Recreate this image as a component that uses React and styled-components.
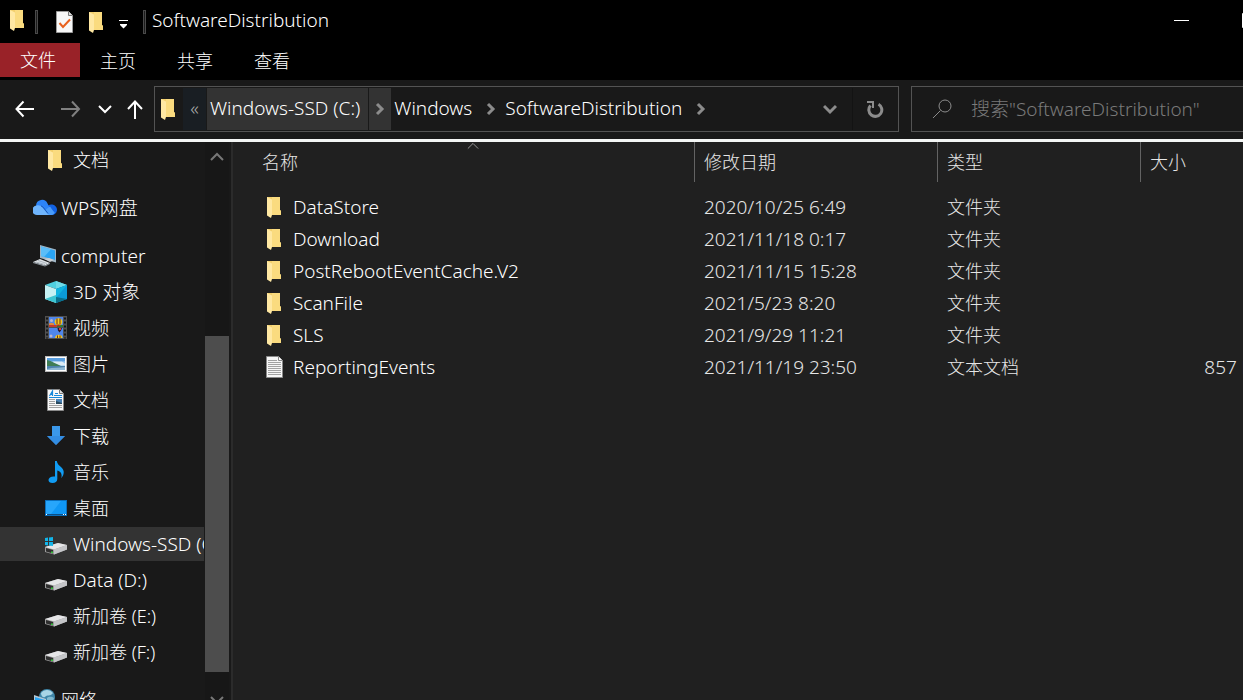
import styled, {createGlobalStyle} from "styled-components";

const GlobalStyle = createGlobalStyle`
  *, *::before, *::after{
    box-sizing: border-box;
  }
  body{
    margin: 0;
    background: #000;
    color: #fff;
    font-family: "Noto Sans", "Noto Sans CJK SC", sans-serif;
    font-size: 18px;
    font-weight: 300;
    line-height: 24px;
  }
  button, input{
    font: inherit;
    color: inherit;
    background: none;
    border: 0;
    padding: 0;
    margin: 0;
  }
  a{
    color: inherit;
    text-decoration: none;
  }
  svg{
    display: block;
    flex: none;
  }
`

/* ---------- icons ---------- */

const FolderIcon = () => (
    <svg width="22" height="22" viewBox="0 0 22 22" aria-hidden="true">
        <path d="M3 1h13v13l1 1v4H3z" fill="#f3cf6c"/>
        <path d="M8 1h8v13l1 1v4H8z" fill="#fadb7f"/>
        <path d="M3 1l5 2.500V19l-1 3-4-2.500z" fill="#ffe8a3"/>
    </svg>
)

const TextFileIcon = () => (
    <svg width="22" height="22" viewBox="0 0 22 22" aria-hidden="true">
        <path d="M2.500.5h12l4 4v17h-16z" fill="#f7f7f7" stroke="#8a8a8a"/>
        <path d="M14.500.5v4h4" fill="#fff" stroke="#8a8a8a"/>
        <path d="M4 4.500h9M4 6.500h13M4 8.500h13M4 10.500h13M4 12.500h13M4 14.500h13M4 16.500h13M4 18.500h13" stroke="#a2a2a2"/>
    </svg>
)

const CheckFileIcon = () => (
    <svg width="22" height="22" viewBox="0 0 22 22" aria-hidden="true">
        <path d="M2.500.5h12l4 4v17h-16z" fill="#f7f7f7" stroke="#9b9b9b"/>
        <path d="M14.500.5v4h4" fill="#ddd" stroke="#777"/>
        <path d="M5.500 12l3.500 4 7-7.500" fill="none" stroke="#e8601c" strokeWidth="2"/>
    </svg>
)

const CloudIcon = () => (
    <svg width="24" height="22" viewBox="0 0 24 22" aria-hidden="true">
        <path d="M12 18h6a5 5 0 0 0 1.500-10.400c-2-.6-4 0-5.500 2z" fill="#1262e3"/>
        <path d="M3 8.500a6 6 0 0 1 11.500-2c1 2 1.500 3 2.500 5l5 4c-1 1.700-2.500 2.500-4 2.500h-6z" fill="#2c84f8"/>
        <path d="M12 13l5-3.500L21.500 16c-1 1.500-2.500 2-3.500 2h-4z" fill="#4a9bf8"/>
        <path d="M4.500 18a4.700 4.700 0 0 1-1-9.500c2-.6 4.500 0 6 2l4 5c1 1.200 1.500 1.800 2.500 2.500z" fill="#6fb4fb"/>
        <path d="M8 9c1.500.3 2.500 1.500 3.500 3l3.500 4.500" fill="none" stroke="#1b58b8"/>
    </svg>
)

const ComputerIcon = () => (
    <svg width="24" height="22" viewBox="0 0 24 22" aria-hidden="true">
        <path d="M7 0l16 4.500v13L7 13z" fill="#9fb4c4"/>
        <path d="M8 1.500l14 4v9.500L8 11z" fill="#2aa5f5"/>
        <path d="M8 1.500l10 2.800L11 12l-3-1z" fill="#5bbdf8"/>
        <path d="M11 14l5-1 5 2-4 2z" fill="#c8cdd2"/>
        <path d="M0 17l7-3 10 4-5 2.500z" fill="#dfe3e6"/>
        <path d="M0 17l12 3.500 5-2.500v1l-5 2.500L0 18z" fill="#8e979e"/>
        <path d="M3 17l9 2.500M5 15.500l9 3" stroke="#9aa4ac" strokeWidth=".7"/>
    </svg>
)

const CubeIcon = () => (
    <svg width="22" height="22" viewBox="0 0 22 22" aria-hidden="true">
        <path d="M0 4l11-4 11 4-11 4z" fill="#4fd0e0"/>
        <path d="M11 0l11 4-11 4z" fill="#6fdbe8"/>
        <path d="M0 4l11 4v14L0 18z" fill="#c6f1f3"/>
        <path d="M0 18l11-4v8z" fill="#3cc5d2"/>
        <path d="M11 8l11-4v14l-11 4z" fill="#0b9bd7"/>
        <path d="M11 8l11-4-11 13z" fill="#10b4e0"/>
        <path d="M11 16l11 2-11 4z" fill="#0a6f8a"/>
    </svg>
)

const VideoIcon = () => (
    <svg width="22" height="24" viewBox="0 0 22 24" aria-hidden="true">
        <path d="M0 0h22v23H0z" fill="#505050"/>
        <path d="M4 1h14v10H4zM4 12h14v10H4z" fill="#4f86ea"/>
        <path d="M4 9h8v2H4z" fill="#c3392d"/>
        <path d="M12 9h6v2h-6z" fill="#2f7a36"/>
        <path d="M4 7.500c1.500-1 3-1 5 0V9H4z" fill="#e08a3a"/>
        <ellipse cx="13.500" cy="5.800" rx="3.800" ry="3.600" fill="#f2c81f"/>
        <path d="M12 2.500v5.500M15 2.500v5.500" stroke="#6b2a18"/>
        <path d="M11 8.500h5l-2.500 2z" fill="#b02a20"/>
        <path d="M12.500 12h4.500l-1 2.500-1.500 2-1.500-2z" fill="#2a1a24"/>
        <path d="M14 12h2v2h-2z" fill="#e03a30"/>
        <path d="M10 22a3.800 3.800 0 0 1 7.500 0z" fill="#f2c81f"/>
        <path d="M12.500 19.500V22M15 19.500V22" stroke="#6b2a18"/>
        <circle cx="6.500" cy="4.500" r="1.500" fill="#b9b6cf"/>
        <circle cx="6" cy="20" r="1.500" fill="#b9b6cf"/>
        <path d="M2 1.500v21M20 1.500v21" stroke="#161616" strokeWidth="2" strokeDasharray="2 2"/>
    </svg>
)

const PictureIcon = () => (
    <svg width="22" height="22" viewBox="0 0 22 22" aria-hidden="true">
        <path d="M0 3h22v16H0z" fill="#b9b9b9"/>
        <path d="M1 4h20v14H1z" fill="#fff"/>
        <path d="M2 5h18v12H2z" fill="#8fc4f0"/>
        <path d="M2 5h18v3c-6 2-12-1-18 1z" fill="#5a9fe0"/>
        <path d="M8 8.500h9l3 2v2H9z" fill="#dcebf5"/>
        <path d="M2 7c5 1 9 4 14 6H2z" fill="#3f7d55"/>
        <path d="M2 13h18v4H2z" fill="#4d83ac"/>
        <path d="M2 16c6-2 12-1 18-2v3H2z" fill="#8fb8d4"/>
    </svg>
)

const DocumentIcon = () => (
    <svg width="22" height="22" viewBox="0 0 22 22" aria-hidden="true">
        <path d="M2.500.5h12l4 4v17h-16z" fill="#f8f8f8" stroke="#8a8a8a"/>
        <path d="M14.500.5v4h4" fill="#ddd" stroke="#777"/>
        <path d="M4.500 7L7.500 2v5M5.500 5.500h2M10 4.500h3M9 6.500h8" fill="none" stroke="#1687d9" strokeWidth="1.200"/>
        <path d="M4 8.500h13" stroke="#1687d9"/>
        <path d="M4 10.500h6M4 12.500h6M4 14.500h6M4 16.500h13M4 18.500h13" stroke="#a0a0a0"/>
        <path d="M11 10h6v5h-6z" fill="#4b83b5"/>
        <path d="M11 12l6 2v1h-6z" fill="#294a60"/>
    </svg>
)

const DownloadIcon = () => (
    <svg width="22" height="22" viewBox="0 0 22 22" aria-hidden="true">
        <path d="M7 1h8v10h5l-9 9-9-9h5z" fill="#3b98ea"/>
        <path d="M2 11h18l-9 9z" fill="#2e86dd" opacity=".6"/>
    </svg>
)

const MusicIcon = () => (
    <svg width="22" height="22" viewBox="0 0 22 22" aria-hidden="true">
        <path d="M10 0h1.800c.4 3 2.500 4.500 4.700 6.600 3.200 3 2.900 7-.2 10.700.9-3.500.3-6.500-4-7.800V18c0 2.400-2 4-4.800 4C5 22 3.500 20.700 3.500 19c0-2.400 2.800-4 6.500-3.500z" fill="#119cf3"/>
    </svg>
)

const DesktopIcon = () => (
    <svg width="22" height="22" viewBox="0 0 22 22" aria-hidden="true">
        <path d="M0 3h22v16H0z" fill="#0a6fbd"/>
        <path d="M1 4h20v13H1z" fill="#0f97f5"/>
        <path d="M1 4h15L6 17H1z" fill="#27a6fb"/>
        <path d="M1 17h20v1H1z" fill="#0b4f86"/>
        <path d="M1 17.500h1M18 17.500h1M20 17.500h1" stroke="#fff"/>
    </svg>
)

const DriveIcon = ({system}) => (
    <svg width="22" height="22" viewBox="0 0 22 22" aria-hidden="true">
        <path d="M0 14l13-4 9 2v4.500L9 21.500 0 19z" fill="#9b9b9b"/>
        <path d="M0 14l13-4 9 2-13 4.500z" fill="#e6e6e8"/>
        <path d="M9 16.500L22 12v4.500L9 21.500z" fill="#c4c5c8"/>
        <path d="M1 15l7 2v3.500l-7-2z" fill="#2e2e2e"/>
        <path d="M6 18.500h2V20H6z" fill="#35c23b"/>
        {system && <path d="M0 5l3-.5V8H0zM4 4.500L8 4v4H4zM0 9h3v3.500L0 12zM4 9h4v4l-4-.5z" fill="#12b5ea"/>}
    </svg>
)

const NetworkIcon = () => (
    <svg width="24" height="22" viewBox="0 0 24 22" aria-hidden="true">
        <circle cx="14" cy="8" r="8" fill="#3f86a8"/>
        <path d="M8 4c3-4 9-4 12 0-3 4-6 1-8 4-2 1-4-1-4-4z" fill="#a8d5e6"/>
        <path d="M14 9c3-2 5-1 7 0-1 4-4 6-7 6z" fill="#7fb9d0"/>
        <path d="M1 6l12 4v9L1 15z" fill="#b8c9d4"/>
        <path d="M2 8l10 3v7L2 14z" fill="#2aa5f5"/>
    </svg>
)

const Chevron = ({d, size = 14, width = 2, color = "#fff"}) => (
    <svg width={size} height={size} viewBox="0 0 14 14" fill="none" stroke={color} strokeWidth={width} aria-hidden="true">
        <path d={d}/>
    </svg>
)

const DOWN = "M1 4l6 6 6-6";
const UP = "M1 10l6-6 6 6";
const RIGHT = "M4 2l5 5-5 5";

/* ---------- title bar ---------- */

const Window = styled.div`
  display: flex;
  flex-direction: column;
  height: 100vh;
  overflow: hidden;
`

const TitleBar = styled.header`
  display: flex;
  align-items: center;
  height: 43px;
  padding: 0 0 3px 7px;
`

const QuickAccess = styled.div`
  display: flex;
  align-items: center;
  gap: 10px;
  padding: 4px 15px 0 16px;
`

const Divider = styled.span`
  width: 3px;
  height: 24px;
  margin-top: 4px;
  border: 1px solid #4a4a4a;
  background: #1c1c1c;
`

const AppIcon = styled.span`
  margin-right: 6px;
`

const Title = styled.h1`
  flex: 1;
  margin: 0;
  padding-left: 6px;
  font-size: 19px;
  font-weight: inherit;
`

const CaptionButtons = styled.div`
  display: flex;
  align-self: stretch;
  width: 95px;
  overflow: hidden;
`

const CaptionButton = styled.button`
  flex: none;
  display: flex;
  align-items: center;
  justify-content: center;
  width: 68px;
`

/* ---------- ribbon ---------- */

const Ribbon = styled.nav`
  display: flex;
  height: 37px;
  padding-bottom: 3px;
`

const RibbonTab = styled.button`
  width: ${props => props.$file ? 80 : 77}px;
  padding: ${props => props.$file ? 0 : 2}px 0 0 20px;
  text-align: left;
  background: ${props => props.$file ? '#992228' : 'transparent'};
`

/* ---------- address row ---------- */

const NavRow = styled.div`
  display: flex;
  align-items: center;
  height: 59px;
  padding-bottom: 1px;
  background: #191919;
  font-size: 19px;
`

const History = styled.div`
  flex: none;
  display: flex;
  align-items: center;
  width: 154px;
  padding-left: 15px;
`

const HistoryButton = styled.button`
  margin-left: ${props => props.$gap || 0}px;
`

const AddressBar = styled.div`
  flex: 1;
  min-width: 0;
  display: flex;
  align-items: center;
  height: 46px;
  padding: 1px 1px 1px 3px;
  border: 1px solid #535353;
`

const Crumb = styled.button`
  padding: 0 8px 2px 3px;
  align-self: stretch;
  margin-right: ${props => props.$active ? 1 : 0}px;
  background: ${props => props.$active ? '#333' : 'transparent'};
  white-space: nowrap;
`

const CrumbArrow = styled.button`
  display: flex;
  align-items: center;
  justify-content: center;
  align-self: stretch;
  width: 22px;
  background: ${props => props.$active ? '#333' : 'transparent'};
`

const CrumbOverflow = styled.button`
  align-self: stretch;
  width: 23px;
  margin: 0 1px 0 3px;
  padding-bottom: 2px;
  background: #191e23;
  color: #b0b0b0;
`

const AddressTools = styled.div`
  display: flex;
  align-self: stretch;
  margin-left: auto;
`

const AddressTool = styled.button`
  display: flex;
  align-items: center;
  justify-content: center;
  width: 45px;
  border-left: 1px solid ${props => props.$line ? '#131313' : 'transparent'};
`

const SearchBox = styled.label`
  flex: 0 0 332px;
  min-width: 0;
  display: flex;
  align-items: center;
  gap: 19px;
  height: 46px;
  margin-left: 12px;
  padding-left: 20px;
  border: 1px solid #535353;
  border-right: 0;
`

const SearchInput = styled.input`
  flex: 1;
  min-width: 0;
  outline: 0;
  &::placeholder{
    color: #7a7a7a;
    opacity: 1;
  }
`

/* ---------- body ---------- */

const Body = styled.div`
  flex: 1;
  display: flex;
  min-height: 0;
  overflow: hidden;
  background: #202020;
  border-top: 3px solid #f4f6f5;
`

const Sidebar = styled.aside`
  flex: none;
  display: flex;
  width: 233px;
  background: #191919;
  border-right: 2px solid #2b2b2b;
`

const Tree = styled.ul`
  flex: none;
  width: 204px;
  margin: 0 1px 0 0;
  padding: 1px 0 0;
  list-style: none;
  overflow: hidden;
`

const TreeItem = styled.li`
  margin-bottom: 2px;
  margin-top: ${props => props.$root ? 14 : 0}px;
`

const TreeLink = styled.a`
  display: flex;
  align-items: center;
  gap: ${props => props.$root ? 4 : 6}px;
  height: 34px;
  padding-left: ${props => props.$root ? 33 : 45}px;
  font-size: ${props => props.$latin ? 19 : 18}px;
  white-space: nowrap;
  background: ${props => props.$selected ? '#333' : 'transparent'};
`

const Scrollbar = styled.div`
  display: flex;
  flex-direction: column;
  width: 24px;
  margin-bottom: -15px;
  background: #171717;
`

const ScrollButton = styled.button`
  display: flex;
  align-items: center;
  justify-content: center;
  height: 30px;
`

const ScrollGap = styled.div`
  flex: ${props => props.$grow};
`

const ScrollThumb = styled.div`
  flex: 336;
  background: #4d4d4d;
`

const Files = styled.main`
  flex: 1;
  min-width: 0;
  overflow: hidden;
`

const FileTable = styled.table`
  width: 1042px;
  table-layout: fixed;
  border-collapse: collapse;
`

const HeadCell = styled.th`
  width: ${props => props.$width}px;
  padding: 0 0 9px;
  font-weight: inherit;
`

const SortButton = styled.button`
  position: relative;
  display: block;
  width: 100%;
  height: 40px;
  padding-left: ${props => props.$first ? 29 : 9}px;
  border-right: 1px solid #636363;
  text-align: left;
  color: #e6e6e6;
`

const SortMark = styled.span`
  position: absolute;
  top: -2px;
  left: calc(50% + 3px);
`

const Cell = styled.td`
  height: 32px;
  padding: 0 10px 0 9px;
  color: #e6e6e6;
  font-size: ${props => props.$latin ? 19 : 18}px;
  text-align: ${props => props.$right ? 'right' : 'left'};
  white-space: nowrap;
`

const NameCell = styled(Cell)`
  padding-left: 31px;
`

const FileName = styled.a`
  display: flex;
  align-items: center;
  gap: 7px;
  color: #fff;
`

const tabs = ["文件", "主页", "共享", "查看"];

const tree = [
    {name: "文档", icon: <FolderIcon/>},
    {name: "WPS网盘", icon: <CloudIcon/>, root: true, latin: true},
    {name: "computer", icon: <ComputerIcon/>, root: true, latin: true},
    {name: "3D 对象", icon: <CubeIcon/>, latin: true},
    {name: "视频", icon: <VideoIcon/>},
    {name: "图片", icon: <PictureIcon/>},
    {name: "文档", icon: <DocumentIcon/>},
    {name: "下载", icon: <DownloadIcon/>},
    {name: "音乐", icon: <MusicIcon/>},
    {name: "桌面", icon: <DesktopIcon/>},
    {name: "Windows-SSD (C:)", icon: <DriveIcon system/>, selected: true, latin: true},
    {name: "Data (D:)", icon: <DriveIcon/>, latin: true},
    {name: "新加卷 (E:)", icon: <DriveIcon/>},
    {name: "新加卷 (F:)", icon: <DriveIcon/>},
    {name: "网络", icon: <NetworkIcon/>, root: true},
];

const columns = [
    {name: "名称", width: 462},
    {name: "修改日期", width: 243},
    {name: "类型", width: 203},
    {name: "大小", width: 134},
];

const files = [
    {name: "DataStore", date: "2020/10/25 6:49", type: "文件夹"},
    {name: "Download", date: "2021/11/18 0:17", type: "文件夹"},
    {name: "PostRebootEventCache.V2", date: "2021/11/15 15:28", type: "文件夹"},
    {name: "ScanFile", date: "2021/5/23 8:20", type: "文件夹"},
    {name: "SLS", date: "2021/9/29 11:21", type: "文件夹"},
    {name: "ReportingEvents", date: "2021/11/19 23:50", type: "文本文档", size: "857 KB"},
];

export default function App(){
    return(
        <Window>
            <GlobalStyle/>

            <TitleBar>
                <AppIcon><FolderIcon/></AppIcon>
                <Divider/>
                <QuickAccess>
                    <button type="button" aria-label="属性"><CheckFileIcon/></button>
                    <button type="button" aria-label="新建文件夹"><FolderIcon/></button>
                    <button type="button" aria-label="自定义快速访问工具栏">
                        <svg width="10" height="14" viewBox="0 0 10 14" fill="#fff" aria-hidden="true">
                            <path d="M1 5h9v1H1zM2 9h7v1l-3.500 3.500L2 10z"/>
                        </svg>
                    </button>
                </QuickAccess>
                <Divider/>
                <Title>SoftwareDistribution</Title>
                <CaptionButtons>
                    <CaptionButton type="button" aria-label="最小化">
                        <svg width="16" height="16" viewBox="0 0 16 16" aria-hidden="true"><path d="M0 8h15v1H0z" fill="#fff"/></svg>
                    </CaptionButton>
                    <CaptionButton type="button" aria-label="最大化">
                        <svg width="16" height="16" viewBox="0 0 16 16" aria-hidden="true"><path d="M.5 1.500h14v14H.5z" fill="none" stroke="#fff"/></svg>
                    </CaptionButton>
                </CaptionButtons>
            </TitleBar>

            <Ribbon>
                {
                    tabs.map((item, index) => (
                        <RibbonTab type="button" key={item} $file={index === 0}>{item}</RibbonTab>
                    ))
                }
            </Ribbon>

            <NavRow>
                <History>
                    <HistoryButton type="button" aria-label="后退">
                        <svg width="20" height="20" viewBox="0 0 20 20" fill="none" stroke="#fff" strokeWidth="2" aria-hidden="true">
                            <path d="M1 10h18M8.500 2.500L1.500 10l7 7.500"/>
                        </svg>
                    </HistoryButton>
                    <HistoryButton type="button" aria-label="前进" $gap={26}>
                        <svg width="20" height="20" viewBox="0 0 20 20" fill="none" stroke="#808080" strokeWidth="2" aria-hidden="true">
                            <path d="M0 10h18M11 2.500l7 7.500-7 7.500"/>
                        </svg>
                    </HistoryButton>
                    <HistoryButton type="button" aria-label="最近浏览的位置" $gap={17}>
                        <Chevron d={DOWN}/>
                    </HistoryButton>
                    <HistoryButton type="button" aria-label="上移" $gap={15}>
                        <svg width="16" height="20" viewBox="0 0 16 20" fill="none" stroke="#fff" strokeWidth="2" aria-hidden="true">
                            <path d="M8 2.500V20M1 10l7-7.500 7 7.500"/>
                        </svg>
                    </HistoryButton>
                </History>
                <AddressBar>
                    <FolderIcon/>
                    <CrumbOverflow type="button">«</CrumbOverflow>
                    <Crumb type="button" $active>Windows-SSD (C:)</Crumb>
                    <CrumbArrow type="button" aria-label="展开" $active><Chevron d={RIGHT} width={3} color="#8c8c8c"/></CrumbArrow>
                    <Crumb type="button">Windows</Crumb>
                    <CrumbArrow type="button" aria-label="展开"><Chevron d={RIGHT} width={3} color="#8c8c8c"/></CrumbArrow>
                    <Crumb type="button">SoftwareDistribution</Crumb>
                    <CrumbArrow type="button" aria-label="展开"><Chevron d={RIGHT} width={3} color="#8c8c8c"/></CrumbArrow>
                    <AddressTools>
                        <AddressTool type="button" aria-label="以前的位置"><Chevron d={DOWN} width={3} color="#8c8c8c"/></AddressTool>
                        <AddressTool type="button" aria-label="刷新" $line>
                            <svg width="18" height="18" viewBox="0 0 18 18" fill="none" stroke="#8c8c8c" aria-hidden="true">
                                <path d="M12.500 4.200A6.500 6.500 0 1 1 4.500 5.500" strokeWidth="3"/>
                                <path d="M1 2h6v6" strokeWidth="2"/>
                            </svg>
                        </AddressTool>
                    </AddressTools>
                </AddressBar>
                <SearchBox>
                    <svg width="20" height="20" viewBox="0 0 20 20" fill="none" stroke="#8c8c8c" strokeWidth="1" aria-hidden="true">
                        <circle cx="13" cy="7" r="6"/>
                        <path d="M8.500 11.500L1 19"/>
                    </svg>
                    <SearchInput type="search" aria-label="搜索" placeholder={'搜索"SoftwareDistribution"'}/>
                </SearchBox>
            </NavRow>

            <Body>
                <Sidebar>
                    <Tree>
                        {
                            tree.map((item, index) => (
                                <TreeItem key={index} $root={item.root}>
                                    <TreeLink href="#" $root={item.root} $latin={item.latin} $selected={item.selected}>
                                        {item.icon}
                                        {item.name}
                                    </TreeLink>
                                </TreeItem>
                            ))
                        }
                    </Tree>
                    <Scrollbar>
                        <ScrollButton type="button" aria-label="向上滚动"><Chevron d={UP} color="#777"/></ScrollButton>
                        <ScrollGap $grow={164}/>
                        <ScrollThumb/>
                        <ScrollGap $grow={13}/>
                        <ScrollButton type="button" aria-label="向下滚动"><Chevron d={DOWN} color="#777"/></ScrollButton>
                    </Scrollbar>
                </Sidebar>

                <Files>
                    <FileTable>
                        <thead>
                            <tr>
                                {
                                    columns.map((item, index) => (
                                        <HeadCell key={item.name} $width={item.width}>
                                            <SortButton type="button" $first={index === 0}>
                                                {item.name}
                                                {index === 0 && <SortMark><Chevron d={UP} size={12} width={1} color="#aaa"/></SortMark>}
                                            </SortButton>
                                        </HeadCell>
                                    ))
                                }
                            </tr>
                        </thead>
                        <tbody>
                            {
                                files.map(item => (
                                    <tr key={item.name}>
                                        <NameCell $latin>
                                            <FileName href="#">
                                                {item.size ? <TextFileIcon/> : <FolderIcon/>}
                                                {item.name}
                                            </FileName>
                                        </NameCell>
                                        <Cell $latin>{item.date}</Cell>
                                        <Cell>{item.type}</Cell>
                                        <Cell $latin $right>{item.size}</Cell>
                                    </tr>
                                ))
                            }
                        </tbody>
                    </FileTable>
                </Files>
            </Body>
        </Window>
    )
}
